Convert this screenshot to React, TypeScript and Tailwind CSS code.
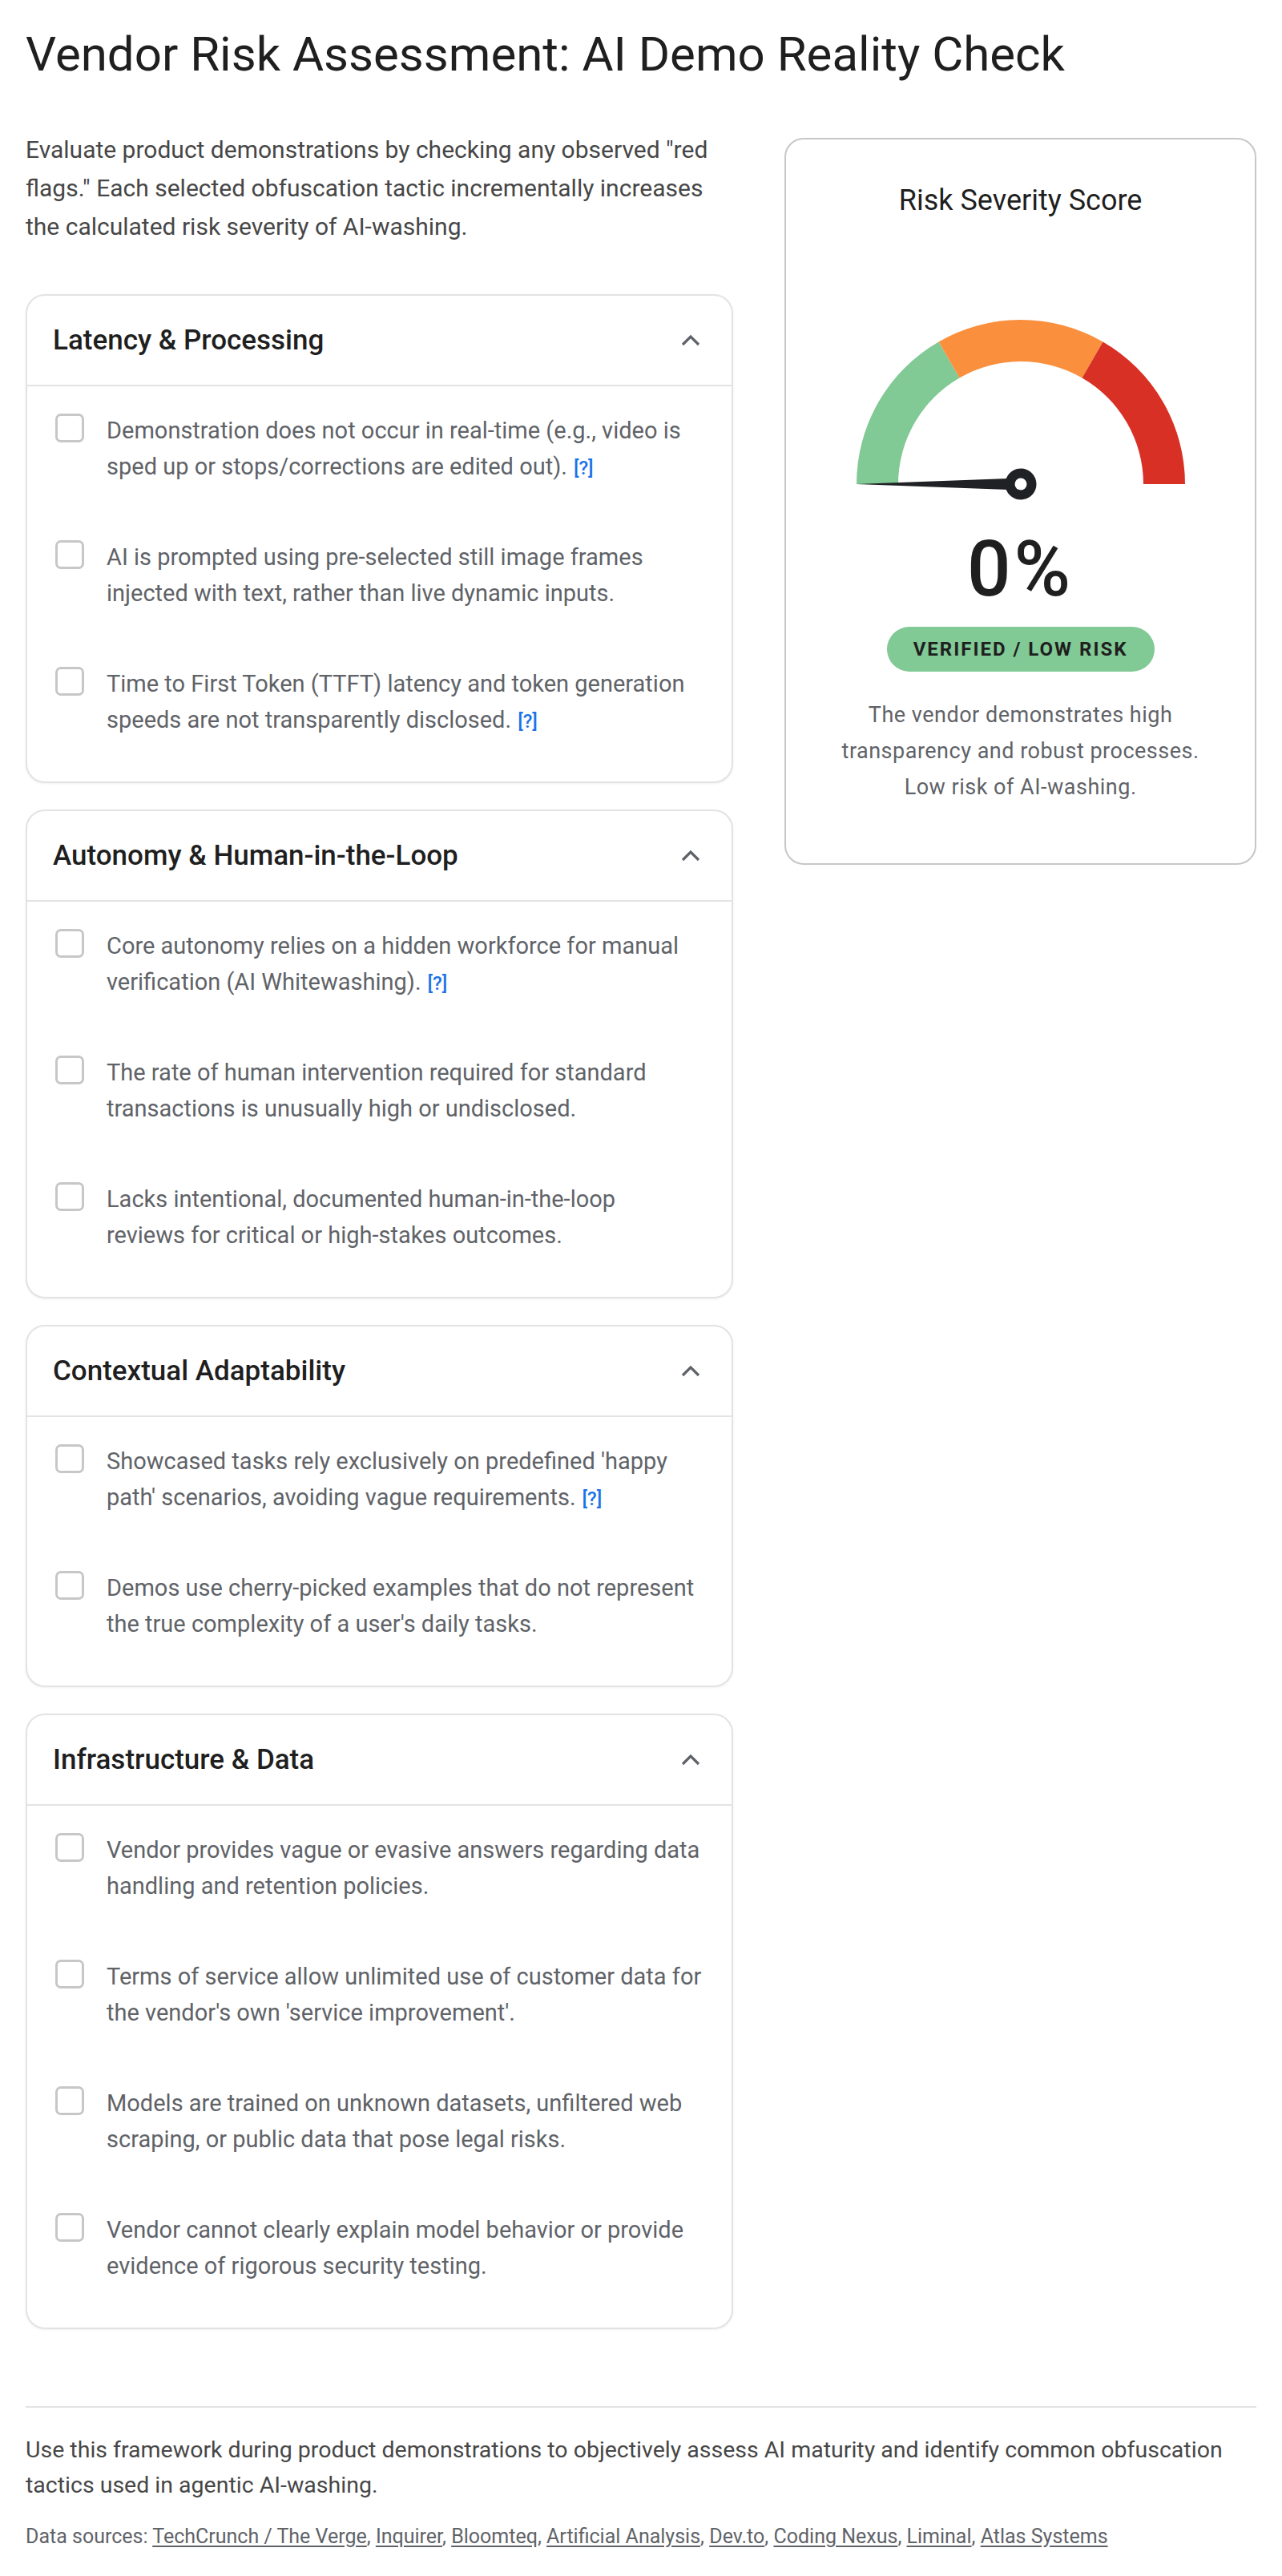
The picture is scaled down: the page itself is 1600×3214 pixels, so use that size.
import { useState } from 'react';

type Item = { id: string; text: string; cite?: boolean };
type Section = { id: string; title: string; items: Item[] };

const SECTIONS: Section[] = [
  {
    id: 'latency',
    title: 'Latency & Processing',
    items: [
      { id: 'l1', text: 'Demonstration does not occur in real-time (e.g., video is sped up or stops/corrections are edited out).', cite: true },
      { id: 'l2', text: 'AI is prompted using pre-selected still image frames injected with text, rather than live dynamic inputs.' },
      { id: 'l3', text: 'Time to First Token (TTFT) latency and token generation speeds are not transparently disclosed.', cite: true },
    ],
  },
  {
    id: 'autonomy',
    title: 'Autonomy & Human-in-the-Loop',
    items: [
      { id: 'a1', text: 'Core autonomy relies on a hidden workforce for manual verification (AI Whitewashing).', cite: true },
      { id: 'a2', text: 'The rate of human intervention required for standard transactions is unusually high or undisclosed.' },
      { id: 'a3', text: 'Lacks intentional, documented human-in-the-loop\nreviews for critical or high-stakes outcomes.' },
    ],
  },
  {
    id: 'context',
    title: 'Contextual Adaptability',
    items: [
      { id: 'c1', text: "Showcased tasks rely exclusively on predefined 'happy path' scenarios, avoiding vague requirements.", cite: true },
      { id: 'c2', text: "Demos use cherry-picked examples that do not represent the true complexity of a user's daily tasks." },
    ],
  },
  {
    id: 'infra',
    title: 'Infrastructure & Data',
    items: [
      { id: 'i1', text: 'Vendor provides vague or evasive answers regarding data handling and retention policies.' },
      { id: 'i2', text: "Terms of service allow unlimited use of customer data for the vendor's own 'service improvement'." },
      { id: 'i3', text: 'Models are trained on unknown datasets, unfiltered web scraping, or public data that pose legal risks.' },
      { id: 'i4', text: 'Vendor cannot clearly explain model behavior or provide evidence of rigorous security testing.' },
    ],
  },
];

const SOURCES = ['TechCrunch / The Verge', 'Inquirer', 'Bloomteq', 'Artificial Analysis', 'Dev.to', 'Coding Nexus', 'Liminal', 'Atlas Systems'];

const TOTAL = SECTIONS.reduce((n, s) => n + s.items.length, 0);

// gauge geometry
const CX = 210;
const CY = 210;
const R_OUT = 205;
const R_IN = 153;

function polar(r: number, deg: number) {
  const a = (deg * Math.PI) / 180;
  return [CX + r * Math.cos(a), CY - r * Math.sin(a)];
}

function arcPath(from: number, to: number) {
  const [x1, y1] = polar(R_OUT, from);
  const [x2, y2] = polar(R_OUT, to);
  const [x3, y3] = polar(R_IN, to);
  const [x4, y4] = polar(R_IN, from);
  return `M${x1} ${y1} A${R_OUT} ${R_OUT} 0 0 1 ${x2} ${y2} L${x3} ${y3} A${R_IN} ${R_IN} 0 0 0 ${x4} ${y4} Z`;
}

function levelFor(score: number) {
  if (score >= 67) {
    return {
      label: 'HIGH RISK / AI-WASHING',
      badge: 'bg-[#d93025] text-white',
      desc: 'Multiple obfuscation tactics observed. High likelihood that capabilities are overstated.',
    };
  }
  if (score >= 34) {
    return {
      label: 'CAUTION / MODERATE RISK',
      badge: 'bg-[#fa903e] text-[#1f1f1f]',
      desc: 'Several red flags observed. Request live, unscripted demonstrations before proceeding.',
    };
  }
  return {
    label: 'VERIFIED / LOW RISK',
    badge: 'bg-[#81c995] text-[#1f1f1f]',
    desc: 'The vendor demonstrates high transparency and robust processes. Low risk of AI-washing.',
  };
}

function Gauge({ score }: { score: number }) {
  const rotation = (score / 100) * 180;
  return (
    <svg width="420" height="230" viewBox="0 0 420 230" className="mt-[120px] block">
      <path d={arcPath(180, 120)} fill="#81c995" />
      <path d={arcPath(120, 60)} fill="#fa903e" />
      <path d={arcPath(60, 0)} fill="#d93025" />
      <g transform={`rotate(${rotation} ${CX} ${CY})`}>
        <polygon points={`${CX - R_OUT},${CY} ${CX},${CY - 7.5} ${CX},${CY + 7.5}`} fill="#202124" />
      </g>
      <circle cx={CX} cy={CY} r="19.5" fill="#202124" />
      <circle cx={CX} cy={CY} r="7.5" fill="#fff" />
    </svg>
  );
}

function Chevron({ open }: { open: boolean }) {
  return (
    <svg width="24" height="15" viewBox="0 0 24 15" className={open ? '' : 'rotate-180'}>
      <path d="M2 13 L12 3 L22 13" fill="none" stroke="#5f6368" strokeWidth="3.2" />
    </svg>
  );
}

function ItemText({ text }: { text: string }) {
  const parts = text.split('\n');
  return (
    <>
      {parts.map((p, i) => (
        <span key={i}>
          {p}
          {i < parts.length - 1 && <br />}
        </span>
      ))}
    </>
  );
}

function SectionCard({
  section,
  checked,
  onToggle,
}: {
  section: Section;
  checked: Record<string, boolean>;
  onToggle: (id: string) => void;
}) {
  const [open, setOpen] = useState(true);
  return (
    <div className="overflow-hidden rounded-[24px] border-2 border-[#e3e3e3] bg-white shadow-[0_1px_3px_rgba(0,0,0,0.06)]">
      <button
        type="button"
        onClick={() => setOpen(!open)}
        className={`flex h-[113px] w-full items-center justify-between pl-[32px] pr-[39px] text-left ${open ? 'border-b-2 border-[#e3e3e3]' : ''}`}
      >
        <span className="text-[35px] font-medium leading-[48px] text-[#1f1f1f]">{section.title}</span>
        <Chevron open={open} />
      </button>
      {open && (
        <div className="flex flex-col gap-[68px] pb-[54px] pl-[35px] pr-[32px] pt-[33px]">
          {section.items.map((item) => (
            <label key={item.id} className="flex cursor-pointer items-start gap-[28px]">
              <input
                type="checkbox"
                checked={!!checked[item.id]}
                onChange={() => onToggle(item.id)}
                className="sr-only"
              />
              <span
                className={`mt-[1px] h-[36px] w-[36px] shrink-0 rounded-[7px] border-[3px] ${
                  checked[item.id] ? 'border-[#1a73e8] bg-[#1a73e8]' : 'border-[#c7c7c7] bg-white'
                }`}
              />
              <span className="text-[29px] leading-[45px] text-[#5f6368]">
                <ItemText text={item.text} />
                {item.cite && (
                  <a
                    href="#"
                    onClick={(e) => e.preventDefault()}
                    className="ml-[8px] inline-block align-baseline text-[24px] font-medium leading-[30px] text-[#1a73e8]"
                  >
                    [?]
                  </a>
                )}
              </span>
            </label>
          ))}
        </div>
      )}
    </div>
  );
}

function App() {
  const [checked, setChecked] = useState<Record<string, boolean>>({});
  const count = Object.values(checked).filter(Boolean).length;
  const score = Math.round((count / TOTAL) * 100);
  const level = levelFor(score);

  function toggle(id: string) {
    setChecked((c) => ({ ...c, [id]: !c[id] }));
  }

  return (
    <div className="min-h-screen bg-white p-[32px] font-[Roboto,'Liberation_Sans',sans-serif] text-[#1f1f1f]">
      <h1 className="text-[60px] font-normal leading-[72px] text-[#1f1f1f]">Vendor Risk Assessment: AI Demo Reality Check</h1>

      <div className="mt-[59px] grid grid-cols-[3fr_2fr] items-start gap-[64px]">
        <div>
          <p className="mb-[60px] text-[30px] leading-[48px] text-[#474747]">
            Evaluate product demonstrations by checking any observed "red flags." Each selected obfuscation tactic incrementally
            increases the calculated risk severity of AI-washing.
          </p>
          <div className="flex flex-col gap-[33px]">
            {SECTIONS.map((s) => (
              <SectionCard key={s.id} section={s} checked={checked} onToggle={toggle} />
            ))}
          </div>
        </div>

        <div className="sticky top-[32px] mt-[9px] flex flex-col items-center rounded-[24px] border-2 border-[#c7c7c7] bg-white px-[48px] pb-[72px] pt-[52px]">
          <h2 className="text-[36px] font-normal leading-[48px] text-[#1f1f1f]">Risk Severity Score</h2>
          <Gauge score={score} />
          <div className="mt-[38px] text-[96px] font-medium leading-[96px] tracking-[4px] text-[#1f1f1f]">{score}%</div>
          <div className={`mt-[24px] flex h-[56px] items-center rounded-full px-[33px] text-[24px] font-bold tracking-[2px] ${level.badge}`}>
            {level.label}
          </div>
          <p className="mt-[32px] text-center text-[27px] leading-[45px] tracking-[0.5px] text-[#5f6368]">{level.desc}</p>
        </div>
      </div>

      <footer className="mt-[96px] border-t-2 border-[#e3e3e3] pt-[31px]">
        <p className="text-[28.5px] leading-[44px] text-[#474747]">
          Use this framework during product demonstrations to objectively assess AI maturity and identify common obfuscation tactics
          used in agentic AI-washing.
        </p>
        <p className="mt-[24px] text-[25px] leading-[36px] text-[#5f6368]">
          Data sources:{' '}
          {SOURCES.map((src, i) => (
            <span key={src}>
              <a href="#" onClick={(e) => e.preventDefault()} className="underline underline-offset-[3px]">
                {src}
              </a>
              {i < SOURCES.length - 1 ? ', ' : ''}
            </span>
          ))}
        </p>
      </footer>
    </div>
  );
}

export default App;
